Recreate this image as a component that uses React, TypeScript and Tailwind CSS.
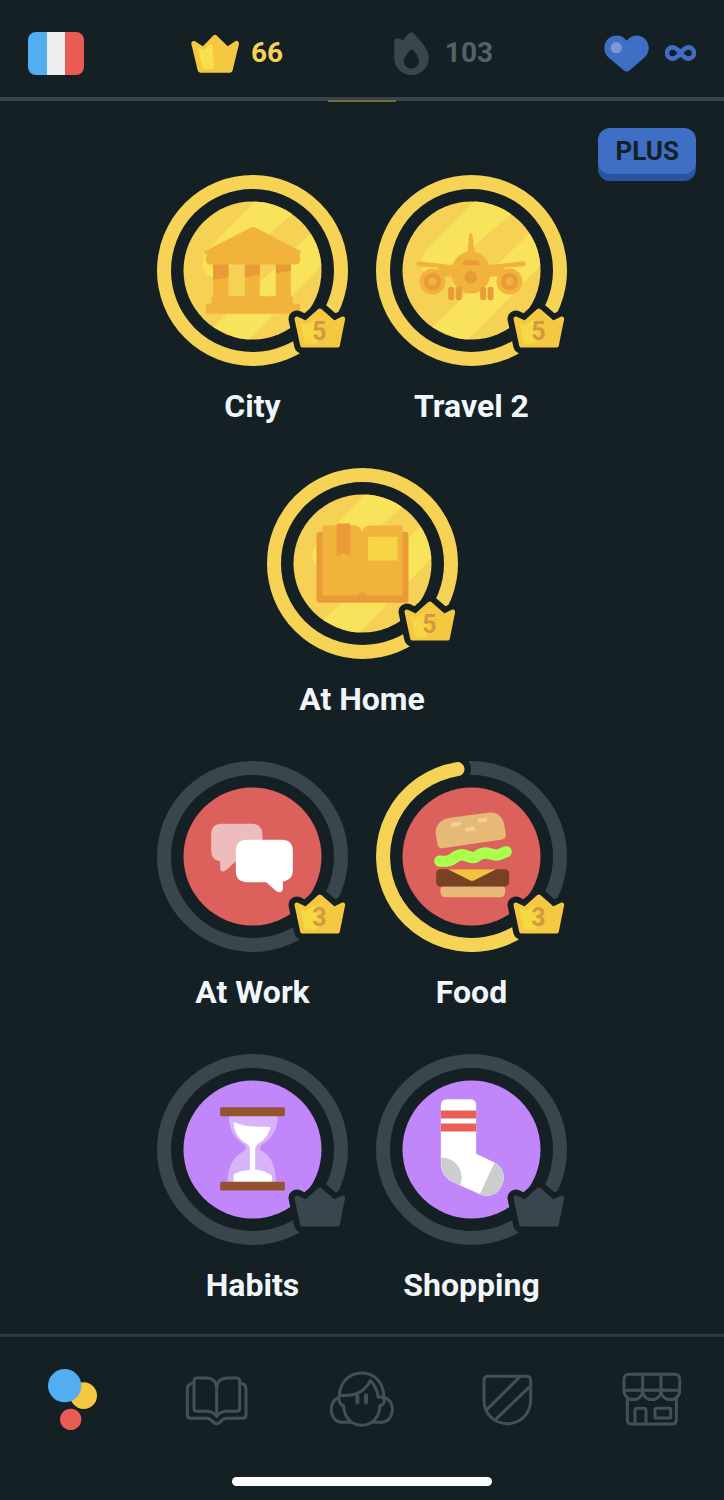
import { useId, type ReactNode } from "react";

type CrownState = { level?: number };

function Stat({ label, icon, children }: { label: string; icon: ReactNode; children: ReactNode }) {
  return (
    <button type="button" aria-label={label} className="flex min-w-24 items-center justify-start text-[28px] font-bold leading-8">
      {icon}
      {children}
    </button>
  );
}

function Header() {
  return (
    <header className="border-b-4 border-[#38454d] px-7 pt-8 pb-[23px]">
      <div className="flex h-[42px] items-center justify-between">
        <button type="button" aria-label="French course" className="flex h-[43px] w-14 overflow-hidden rounded-lg">
          <span className="h-full flex-1 bg-[#53adf1]" />
          <span className="h-full flex-1 bg-[#edeef0]" />
          <span className="h-full flex-1 bg-[#ea5b54]" />
        </button>

        <Stat
          label="66 crowns"
          icon={
            <svg viewBox="567 99 144 117" className="mr-3 h-[39px] w-12" aria-hidden="true">
              <path
                d="M576 128 604 146 639 110 676 146 703 128 684 207H595Z"
                fill="#f5c842"
                stroke="#f5c842"
                strokeWidth="16"
                strokeLinejoin="round"
              />
              <path
                d="M592 140 604 147 625 129Q631 126 631 133L636 198Q636 204 630 204H608Q602 204 601 198L588 146Q587 139 592 140Z"
                fill="#f8e04d"
              />
            </svg>
          }
        >
          <span className="text-[#f6d357]">66</span>
        </Stat>

        <Stat
          label="103 day streak"
          icon={
            <svg viewBox="93 94 105 130" className="mr-4 h-[43px] w-[35px]" aria-hidden="true">
              <path
                d="M93 121Q94 112 104 113 112 114 119 120L136 100Q145 90 154 100C172 121 198 146 198 172A52.5 52 0 0 1 93 172Z"
                fill="#3a464e"
              />
              <path d="M140 151Q146 144 152 151C163 164 168 174 168 183A23 22 0 0 1 122 183C122 174 130 163 140 151Z" fill="#152024" />
            </svg>
          }
        >
          <span className="text-[#53636c]">103</span>
        </Stat>

        <Stat
          label="Unlimited hearts"
          icon={
            <svg viewBox="725 104 135 111" className="mr-4 ml-auto h-[37px] w-[45px]" aria-hidden="true">
              <path
                d="M793 121C779 101 751 101 737 116 722 131 722 155 737 170L783 209Q793 218 803 209L848 170C863 155 863 131 848 116 834 101 807 101 793 121Z"
                fill="#3e6fc4"
              />
              <circle cx="762" cy="142" r="17" fill="#7898d6" />
            </svg>
          }
        >
          <svg viewBox="908 137 94 48" className="h-4 w-[31px]" aria-hidden="true">
            <path
              d="M955 161C946 149 939 144 931 144A17 17 0 0 0 931 178C939 178 946 173 955 161 964 149 971 144 979 144A17 17 0 0 1 979 178C971 178 964 173 955 161Z"
              fill="none"
              stroke="#3e6fc4"
              strokeWidth="14"
            />
          </svg>
        </Stat>
      </div>
    </header>
  );
}

const CROWN = "M441 449 468 462 510 425 553 462 579 449 563 528H458Z";

function Crown({ level }: CrownState) {
  const fill = level ? "#f5c842" : "#3a464e";
  return (
    <>
      <g transform="scale(.33333) translate(-308 -304)" strokeLinejoin="round">
        <path d={CROWN} fill="#152024" stroke="#152024" strokeWidth="50" />
        <path d={CROWN} fill={fill} stroke={fill} strokeWidth="14" />
        {level && (
          <path d="M452 460 468 468 494 450Q506 452 506 470V512Q506 524 494 524H474Q465 524 463 515Z" fill="#f6d845" />
        )}
      </g>
      {level && (
        <text x="67" y="69" textAnchor="middle" className="text-[25px] font-bold" fill="#d3993f">
          {level}
        </text>
      )}
    </>
  );
}

type SkillProps = {
  name: string;
  tone: "gold" | "red" | "purple";
  level?: number;
  progress?: "none" | "partial" | "full";
  center: [number, number];
  children: ReactNode;
};

const DISC = { gold: "#f5d256", red: "#dc605c", purple: "#c186fa" };

function Skill({ name, tone, level, progress = "none", center, children }: SkillProps) {
  const clip = useId();
  return (
    <button type="button" className="flex w-[191px] flex-col items-center gap-5">
      <svg viewBox="-95.5 -95.5 191 191" className="size-[191px]" aria-hidden="true">
        <clipPath id={clip}>
          <circle r="69" />
        </clipPath>
        <circle r="88.5" fill="none" stroke={progress === "full" ? "#f6d355" : "#3a464e"} strokeWidth="14" />
        {progress === "partial" && (
          <>
            <circle cx="-14" cy="-87.4" r="13.5" fill="#152024" />
            <path
              d="M62.6 62.6A88.5 88.5 0 1 1 -14 -87.4"
              fill="none"
              stroke="#f6d355"
              strokeWidth="14"
              strokeLinecap="round"
            />
          </>
        )}
        <circle r="69" fill={DISC[tone]} />
        {tone === "gold" && (
          <g clipPath={`url(#${clip})`}>
            <g transform="scale(.33333) translate(-308 -304)" fill="#f9e35a">
              <path d="M325 88 176 238C140 280 165 335 205 322L445 120 400 80Z" />
              <path d="M496 180 190 474 290 520 530 274Z" />
            </g>
          </g>
        )}
        <g transform={`scale(.33333) translate(${-center[0]} ${-center[1]})`}>{children}</g>
        <Crown level={level} />
      </svg>
      <span className="whitespace-nowrap text-[32px] font-bold leading-10 text-[#f1f6fb]">{name}</span>
    </button>
  );
}

function Temple() {
  return (
    <>
      <g fill="#f2b33d">
        <path d="M304 175Q310 171 316 175L450 244Q457 250 450 256H168Q161 250 168 244Z" />
        <rect x="168" y="252" width="283" height="34" rx="13" />
        <path d="M190 284h46v100h-46zM285 284h45v100h-45zM378 284h45v100h-45z" />
        <path d="M190 381H424Q429 381 429 386V403H446Q451 403 451 408V429Q451 434 446 434H173Q168 434 168 429V408Q168 403 173 403H185V386Q185 381 190 381Z" />
      </g>
      <path d="M190 286h46v39l-46 7zM285 286h45v31l-45 7zM378 286h45v19l-45 7z" fill="#e99b37" />
    </>
  );
}

function Plane() {
  return (
    <>
      <g fill="#f2b33d">
        <path d="M297 196Q302 186 307 196L314 255H291Z" />
        <path d="M145 276 250 288H355L460 276Q468 277 467 285 466 291 459 292L360 298V324H245V298L146 292Q138 291 137 284 138 276 145 276Z" />
        <path d="M200 296 250 290V322L222 322ZM405 296 355 290V322L383 322Z" />
        <ellipse cx="302" cy="310" rx="59" ry="63" />
        <circle cx="187" cy="337" r="39" />
        <circle cx="418" cy="337" r="39" />
      </g>
      <g fill="#e99b37">
        <path d="M285 273H320Q329 276 330 288H276Q277 276 285 273Z" />
        <circle cx="302" cy="324" r="19" />
        <circle cx="187" cy="337" r="26" />
        <circle cx="418" cy="337" r="26" />
        <rect x="234" y="353" width="18" height="40" rx="8" />
        <rect x="257" y="353" width="18" height="40" rx="8" />
        <rect x="330" y="353" width="18" height="40" rx="8" />
        <rect x="352" y="353" width="18" height="40" rx="8" />
      </g>
      <circle cx="187" cy="337" r="12" fill="#f2b33d" />
      <circle cx="418" cy="337" r="12" fill="#f2b33d" />
    </>
  );
}

function OpenBook() {
  return (
    <>
      <rect x="168" y="217" width="276" height="213" rx="11" fill="#e99b37" />
      <path
        d="M191 198H280Q301 199 305 218 309 199 330 198H421Q426 198 426 203V408H324C315 407 313 398 305 398S295 407 286 408H186V203Q186 198 191 198Z"
        fill="#f2b33d"
      />
      <path d="M231 192H266Q270 192 270 196V290L248 282 228 290V196Q228 192 231 192Z" fill="#e99b37" />
      <rect x="322" y="232" width="89" height="71" rx="3" fill="#f6d444" />
    </>
  );
}

function Chat() {
  return (
    <>
      <path
        d="M216 206H306Q338 206 338 238V318H258L229 345Q211 355 211 338V318Q184 316 184 286V238Q184 206 216 206Z"
        fill="#eebcbd"
      />
      <path
        d="M292 254H395Q429 254 429 288V347Q429 374 399 380V401Q396 416 381 409L349 381H292Q258 381 258 347V288Q258 254 292 254Z"
        fill="#fff"
      />
    </>
  );
}

function Burger() {
  return (
    <>
      <path
        d="M240 188 358 172C385 170 400 188 403 213L407 238Q408 250 396 253L217 279Q205 280 202 268L197 237C194 211 211 192 240 188Z"
        fill="#e7b976"
      />
      <g stroke="#f4cf98" strokeWidth="12" strokeLinecap="round">
        <path d="M248 208 267 206M290 223 309 220M327 196 346 194" />
      </g>
      <path
        d="M209 318C255 324 250 295 280 299 299 303 309 315 325 300 345 286 361 298 378 300 393 301 399 290 408 290"
        fill="none"
        stroke="#a8ff4c"
        strokeWidth="34"
        strokeLinecap="round"
        strokeLinejoin="round"
      />
      <rect x="198" y="342" width="219" height="52" rx="13" fill="#774222" />
      <path d="M233 342H378L313 375Q306 379 299 375Z" fill="#f4c142" />
      <path d="M219 395H397Q405 395 405 403V411Q404 426 390 426H226Q212 426 211 411V403Q211 395 219 395Z" fill="#e7b976" />
    </>
  );
}

function Hourglass() {
  return (
    <>
      <path
        d="M237 203H384C384 247 365 272 335 290Q325 300 335 308C362 323 378 350 378 402H233C233 351 254 324 283 308Q293 300 283 290C253 272 237 244 237 203Z"
        fill="#d7b3fa"
      />
      <path
        d="M253 222C286 236 322 236 360 236Q363 237 361 242C353 268 336 281 322 289Q316 294 316 302V365C337 365 353 373 366 383V402H251V380C263 370 283 366 300 366V302Q300 293 294 289C266 272 253 252 251 225Q250 221 253 222Z"
        fill="#fff"
      />
      <rect x="211" y="177" width="194" height="27" rx="4" fill="#93542d" />
      <rect x="211" y="401" width="194" height="26" rx="4" fill="#93542d" />
    </>
  );
}

function Sock() {
  return (
    <>
      <path
        d="M230 153H300Q318 153 318 171V317L373 343C406 360 410 402 383 430 369 443 347 446 329 438L249 402C225 391 212 371 212 343V171Q212 153 230 153Z"
        fill="#fff"
      />
      <path d="M212 187h106v24H212zM212 226h106v24H212z" fill="#ea5f58" />
      <path d="M213 329C251 327 287 365 270 411L249 402C225 391 213 371 213 343Z" fill="#cccdcf" />
      <path d="M373 343C406 360 410 402 383 430 369 443 347 446 329 438Z" fill="#cccdcf" />
    </>
  );
}

function TabIcon({ viewBox, children }: { viewBox: string; children: ReactNode }) {
  return (
    <svg
      viewBox={viewBox}
      className="size-16"
      fill="none"
      stroke="#43505a"
      strokeWidth="9"
      strokeLinejoin="round"
      strokeLinecap="round"
      aria-hidden="true"
    >
      {children}
    </svg>
  );
}

function Tab({ label, children }: { label: string; children: ReactNode }) {
  return (
    <a href="#" aria-label={label} className="flex justify-center">
      {children}
    </a>
  );
}

function BottomNav() {
  return (
    <footer className="border-t-3 border-[#2d393f] pt-[31px] pb-[14px]">
      <nav className="grid grid-cols-5">
        <Tab label="Learn">
          <TabIcon viewBox="121 144 192 192">
            <g stroke="none">
              <circle cx="252" cy="227" r="40" fill="#f5c842" />
              <circle cx="195" cy="197" r="50" fill="#53adf1" />
              <circle cx="213" cy="298" r="32" fill="#ea5b54" />
            </g>
          </TabIcon>
        </Tab>
        <Tab label="Stories">
          <TabIcon viewBox="555 144 192 192">
            <path d="M650 202C648 184 638 174 620 174H591Q582 174 582 183V265Q582 274 591 274H617C636 274 645 281 650 289 655 281 664 274 683 274H710Q719 274 719 265V183Q719 174 710 174H681C663 174 652 184 650 202V286" />
            <path d="M580 190Q562 191 562 208V284Q562 295 573 295H621C636 295 637 311 650 311S664 295 679 295H727Q738 295 738 284V208Q738 191 720 190" />
          </TabIcon>
        </Tab>
        <Tab label="Profile">
          <TabIcon viewBox="15 9 192 192">
            <path d="M43 90C46 50 73 24 110 24S174 50 177 94" />
            <path d="M43 90C84 97 119 82 136 47 148 59 157 78 160 97 181 90 184 119 165 122 164 153 144 181 110 181S57 153 56 122C44 121 40 105 43 90Z" />
            <path d="M39 99C8 110 13 172 51 172H76M181 99C213 110 208 172 169 172H145" />
            <path d="M97 94V112M123 91V112" strokeWidth="12" />
          </TabIcon>
        </Tab>
        <Tab label="Leagues">
          <TabIcon viewBox="339 144 192 192">
            <path d="M379 169H493Q506 169 506 182V239C506 282 475 311 436 311S366 282 366 239V182Q366 169 379 169Z" />
            <path d="M473 171 375 268M504 199 401 298" />
          </TabIcon>
        </Tab>
        <Tab label="Shop">
          <TabIcon viewBox="773 144 192 192">
            <path d="M800 163H937Q952 163 952 178V211H785V178Q785 163 800 163ZM841 163V211M896 163V211" />
            <path d="M785 211C785 248 841 248 841 211 841 248 896 248 896 211 896 248 952 248 952 211" />
            <path d="M795 237V299Q795 312 808 312H929Q942 312 942 299V237" />
            <path d="M818 311V271Q818 265 824 265H845Q851 265 851 271V311" />
            <rect x="878" y="265" width="47" height="29" rx="4" />
          </TabIcon>
        </Tab>
      </nav>
      <div className="mx-auto mt-[45px] h-[9px] w-[36%] rounded-full bg-white" />
    </footer>
  );
}

export default function App() {
  return (
    <div className="flex min-h-screen flex-col bg-[#152024] font-['Roboto',sans-serif] text-white">
      <Header />
      <main className="relative flex flex-1 flex-col items-center gap-[42px] pt-[74px] pb-7">
        <span className="absolute -top-px left-1/2 h-0.5 w-[68px] -translate-x-1/2 bg-[#786936]" />
        <button
          type="button"
          className="absolute top-[27px] right-7 rounded-xl bg-[#3e6fc4] px-[17px] py-[7px] text-[26px] font-bold leading-8 text-[#152024] shadow-[0_7px_0_#2854a1]"
        >
          PLUS
        </button>
        <div className="flex gap-7">
          <Skill name="City" tone="gold" level={5} progress="full" center={[308, 304]}>
            <Temple />
          </Skill>
          <Skill name="Travel 2" tone="gold" level={5} progress="full" center={[304, 304]}>
            <Plane />
          </Skill>
        </div>
        <div className="flex gap-7">
          <Skill name="At Home" tone="gold" level={5} progress="full" center={[306, 312]}>
            <OpenBook />
          </Skill>
        </div>
        <div className="flex gap-7">
          <Skill name="At Work" tone="red" level={3} center={[308, 304]}>
            <Chat />
          </Skill>
          <Skill name="Food" tone="red" level={3} progress="partial" center={[304, 304]}>
            <Burger />
          </Skill>
        </div>
        <div className="flex gap-7">
          <Skill name="Habits" tone="purple" center={[308, 304]}>
            <Hourglass />
          </Skill>
          <Skill name="Shopping" tone="purple" center={[304, 304]}>
            <Sock />
          </Skill>
        </div>
      </main>
      <BottomNav />
    </div>
  );
}
